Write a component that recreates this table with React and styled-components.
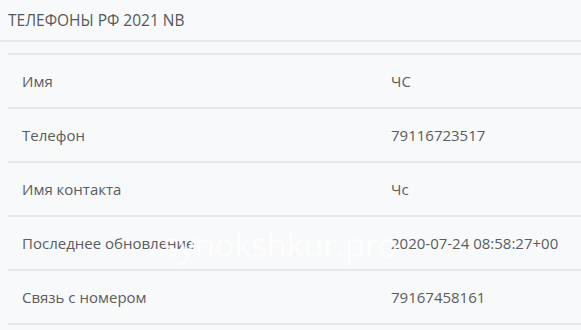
import React from "react";
import styled, { createGlobalStyle } from "styled-components";

const GlobalStyle = createGlobalStyle`
  html, body {
    margin: 0;
    padding: 0;
    background: #f8f9fa;
  }
  body {
    font-family: "Open Sans", "Noto Sans", sans-serif;
    color: #5a5c5e;
    overflow: hidden;
  }
`;

const Page = styled.div`
  position: relative;
  width: 581px;
  height: 330px;
  background: #f8f9fa;
`;

const Header = styled.div`
  height: 40px;
  display: flex;
  align-items: center;
  padding-left: 8px;
  border-bottom: 2px solid #e6e8eb;
  font-size: 15.5px;
  color: #56585a;
`;

const Body = styled.div`
  padding: 11px 0 0 8px;
`;

const Table = styled.div`
  border-top: 2px solid #e6e8eb;
`;

const Row = styled.div`
  display: grid;
  grid-template-columns: 369px 1fr;
  align-items: center;
  height: 52px;
  border-bottom: 2px solid #e6e8eb;
  padding-left: 14px;
  font-size: 15px;
`;

const Label = styled.span`
  color: #5a5c5e;
`;

const Value = styled.span`
  color: #5a5c5e;
`;

const Watermark = styled.div`
  position: absolute;
  left: 163px;
  top: 222px;
  font-size: 33px;
  font-family: "Open Sans", sans-serif;
  color: rgba(255, 255, 255, 0.8);
  pointer-events: none;
  letter-spacing: -0.3px;
`;

const rows = [
  ["Имя", "ЧС"],
  ["Телефон", "79116723517"],
  ["Имя контакта", "Чс"],
  ["Последнее обновление", "2020-07-24 08:58:27+00"],
  ["Связь с номером", "79167458161"],
];

const App = () => {
  return (
    <Page>
      <GlobalStyle />
      <Header>ТЕЛЕФОНЫ РФ 2021 NB</Header>
      <Body>
        <Table>
          {rows.map(([label, value]) => (
            <Row key={label}>
              <Label>{label}</Label>
              <Value>{value}</Value>
            </Row>
          ))}
        </Table>
      </Body>
      <Watermark>synokshkur.pro</Watermark>
    </Page>
  );
};

export default App;
